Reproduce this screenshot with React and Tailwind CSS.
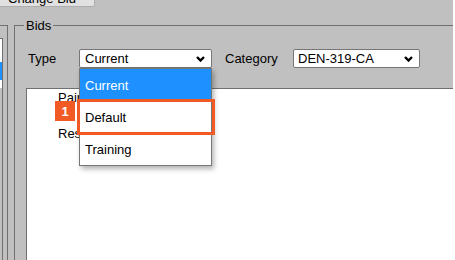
import React from "react";

function Chevron() {
  return (
    <svg width="9" height="6" viewBox="0 0 9 6" className="shrink-0">
      <polyline points="1,1 4.5,4.5 8,1" fill="none" stroke="#000" strokeWidth="2.4" />
    </svg>
  );
}

export default function App() {
  return (
    <div
      className="flex w-[455px] h-[260px] overflow-hidden bg-white text-[13px] leading-[15px] text-black"
      style={{ fontFamily: '"Liberation Sans", Arial, sans-serif' }}
    >
      <div className="w-[453px] bg-[#c0c0c0] flex flex-col">
        {/* top button row */}
        <div className="h-[17px] flex">
          <div className="ml-[-2px] mt-[-15px] w-[97px] h-[22px] border border-[#adadad] bg-[#e1e1e1] flex items-start pt-[5px] pl-[9px] rounded-[2px]">
            Change Bid
          </div>
        </div>
        {/* body */}
        <div className="flex flex-1 min-h-0">
          {/* left panel */}
          <div className="w-[8px] mt-[8px] border-t border-r border-[#707070] shrink-0">
            <div className="w-[3px] mt-[12px] h-[400px] border-t border-r border-[#707070] flex flex-col">
              <div className="h-[23px] bg-white" />
              <div className="h-[18px] bg-[#1e90ff]" />
              <div className="h-[8px] bg-white" />
            </div>
          </div>
          {/* fieldset */}
          <fieldset className="ml-[6px] flex-1 min-w-0 border-l border-t border-[#707070]">
            <legend className="ml-[9px] px-[2px] leading-[17px]">Bids</legend>
            <div className="flex flex-col h-[300px]">
              <div className="mt-[15px] h-[19px] flex items-center pl-[13px]">
                <div className="w-[51px]">Type</div>
                <div className="relative w-[133px] h-[19px] border border-[#767676] bg-white rounded-[2px] flex items-center justify-between pl-[5px] pr-[6px]">
                  <span>Current</span>
                  <Chevron />
                  {/* dropdown list */}
                  <div className="absolute left-[-1px] top-[18px] w-[133px] border border-[#767676] bg-white shadow-[2px_3px_5px_rgba(0,0,0,0.3)] z-10">
                    <div className="h-[32px] bg-[#1e90ff] text-white flex items-center pl-[5px]">Current</div>
                    <div className="h-[32px] flex items-center pl-[5px]">Default</div>
                    <div className="h-[32px] flex items-center pl-[5px]">Training</div>
                  </div>
                  {/* annotation highlight */}
                  <div className="absolute left-[-3px] top-[49px] w-[138px] h-[36px] border-[3px] border-[#f15a24] z-20" />
                  {/* badge */}
                  <div className="absolute left-[-25px] top-[51px] w-[20px] h-[20px] bg-[#f15a24] text-white font-bold flex items-center justify-center z-20">
                    1
                  </div>
                </div>
                <div className="ml-[13px] w-[68px]">Category</div>
                <div className="w-[127px] h-[19px] border border-[#767676] bg-white rounded-[2px] flex items-center justify-between pl-[4px] pr-[6px]">
                  <span>DEN-319-CA</span>
                  <Chevron />
                </div>
              </div>
              <div className="mt-[20px] ml-[11px] flex-1 bg-white border-t border-l border-[#707070] pl-[31px] pt-[1px]">
                <div>Pairings</div>
                <div className="mt-[21px]">Reserve</div>
              </div>
            </div>
          </fieldset>
        </div>
      </div>
      <div className="w-[2px] bg-white" />
    </div>
  );
}
